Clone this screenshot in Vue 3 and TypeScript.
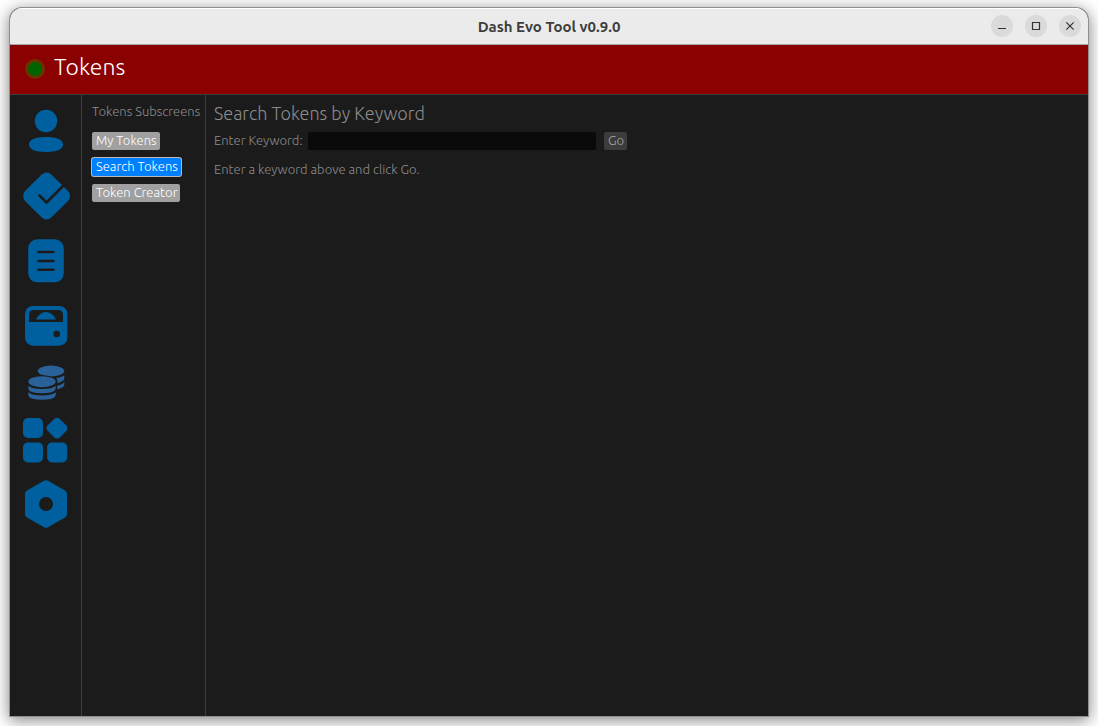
<script setup lang="ts">
import { ref } from 'vue'

const subscreens: string[] = ['My Tokens', 'Search Tokens', 'Token Creator']
const active = ref<string>('Search Tokens')
const keyword = ref<string>('')
</script>

<template>
  <div class="window">
    <header class="titlebar">
      <span class="title">Dash Evo Tool v0.9.0</span>
      <div class="controls">
        <button type="button" aria-label="Minimize">
          <svg viewBox="0 0 22 22"><path d="M7 13.5h8" /></svg>
        </button>
        <button type="button" aria-label="Maximize">
          <svg viewBox="0 0 22 22"><path d="M7.5 7.5h7v7h-7z" /></svg>
        </button>
        <button type="button" aria-label="Close">
          <svg viewBox="0 0 22 22"><path d="M7.3 7.3l7.4 7.4M14.7 7.3l-7.4 7.4" /></svg>
        </button>
      </div>
    </header>

    <div class="banner">
      <span class="status"></span>
      <h1>Tokens</h1>
    </div>

    <div class="body">
      <nav class="rail">
        <button type="button" aria-label="Identities">
          <svg viewBox="0 0 48 50">
            <circle cx="24" cy="15" r="11.2" />
            <path d="M24 31c12 0 17 3 17 7.500s-5 7.500-17 7.500-17-3-17-7.500 5-7.500 17-7.500z" />
          </svg>
        </button>
        <button type="button" aria-label="Contracts">
          <svg viewBox="0 0 48 50">
            <path d="M20 3.200Q24.500 0 29 3.200L46 20Q50 25 46 30L29 46.800Q24.500 50 20 46.800L3 30Q-.5 25 3 20z" />
            <path class="cut" d="M17.500 24.500l7 7L43 13" />
          </svg>
        </button>
        <button type="button" aria-label="Documents">
          <svg viewBox="0 0 48 50">
            <rect x="6.200" y="3.300" width="35.600" height="43" rx="9" />
            <path class="cut" d="M16.500 16h15M16.500 25h15M16.500 33.800h15" />
          </svg>
        </button>
        <button type="button" aria-label="Wallets">
          <svg viewBox="0 0 48 50">
            <rect x="3" y="5" width="42.400" height="39.700" rx="8" />
            <path class="hole" d="M7 21v-7q0-5 5-5h24q5 0 5 5v7z" />
            <path d="M14 18.400c2-4 6-7.400 10-7.400s8 3.400 10 7.400z" />
            <circle class="hole" cx="34.700" cy="33" r="3.300" />
          </svg>
        </button>
        <button type="button" aria-label="Tokens" class="coins">
          <svg viewBox="0 0 48 34">
            <ellipse cx="29" cy="5" rx="13.300" ry="5.400" />
            <path d="M42.300 9.500v3.200q-1 3-7 4.200v-3.400q-1-1-1.600-1.400 6-.8 8.600-2.600zM42.300 15.800v3.200q-1 3-7 4.200v-3.600q6-1 7-3.800z" />
            <ellipse class="rim" cx="20" cy="15.700" rx="14.600" ry="6.400" />
            <ellipse cx="20" cy="15.700" rx="13.700" ry="5.500" />
            <path d="M6.300 19.800q4 3.200 13.700 3.200t13.700-3.200v3.200q-1.700 4.300-13.700 4.300T6.300 23z" />
            <path d="M6.300 26.200q4 3.200 13.700 3.200t13.700-3.200v3.200q-1.700 4.300-13.700 4.300T6.300 29.400z" />
          </svg>
        </button>
        <button type="button" aria-label="Tools">
          <svg viewBox="0 0 48 50">
            <rect x="1" y="3" width="20" height="20" rx="5" />
            <path d="M32.500 3.700q2.500-1.800 5 0l7.200 7.100q1.800 2.400 0 4.800l-7.200 7.100q-2.500 1.800-5 0l-7.200-7.100q-1.800-2.400 0-4.800z" />
            <rect x="1" y="27.400" width="20" height="20" rx="5" />
            <rect x="25.200" y="27.400" width="20" height="20" rx="5" />
          </svg>
        </button>
        <button type="button" aria-label="Settings">
          <svg viewBox="0 0 48 50">
            <path d="M22 .8q2-1.200 4 0l17 9.700q2 1.300 2 3.500v20q0 2.200-2 3.500l-17 9.700q-2 1.200-4 0l-17-9.700q-2-1.300-2-3.500V14q0-2.200 2-3.500z" />
            <circle class="hole" cx="24" cy="24" r="7" />
          </svg>
        </button>
      </nav>

      <aside class="subscreens">
        <p>Tokens Subscreens</p>
        <button
          v-for="name in subscreens"
          :key="name"
          type="button"
          :class="{ active: name === active }"
          @click="active = name"
        >{{ name }}</button>
      </aside>

      <main>
        <h2>Search Tokens by Keyword</h2>
        <form @submit.prevent>
          <label for="keyword">Enter Keyword:</label>
          <input id="keyword" v-model="keyword" type="text" />
          <button type="submit">Go</button>
        </form>
        <p>Enter a keyword above and click Go.</p>
      </main>
    </div>
  </div>
</template>

<style>
body {
  background: #fff;
}
</style>

<style scoped>
* {
  box-sizing: border-box;
}

h1, h2, p {
  margin: 0;
  font-weight: 300;
}

button {
  padding: 0;
  border: 0;
  font: inherit;
}

.window {
  display: flex;
  flex-direction: column;
  min-height: calc(100vh - 18px);
  margin: 8px 10px 10px;
  overflow: hidden;
  border-radius: 12px 12px 0 0;
  background: #1b1b1b;
  color: #8c8c8c;
  font: 300 13px/16px Ubuntu, "Open Sans", "Noto Sans", sans-serif;
  box-shadow: 0 0 0 1px #8f8f8f, 0 3px 16px 1px rgba(0, 0, 0, 0.5);
}

.titlebar {
  display: grid;
  grid-template-columns: 1fr auto 1fr;
  align-items: center;
  height: 37px;
  padding: 0 7px;
  border-bottom: 1px solid #a5a5a5;
  background: #ebebeb;
  box-shadow: inset 0 1px #fff;
}

.title {
  grid-column: 2;
  padding-top: 2px;
  color: #3d3d3d;
  font-size: 15px;
  font-weight: 700;
}

.controls {
  display: flex;
  justify-content: flex-end;
  gap: 12px;
}

.controls button {
  width: 22px;
  height: 22px;
  border-radius: 50%;
  background: #dadada;
}

.controls svg {
  display: block;
  fill: none;
  stroke: #333;
  stroke-width: 1.200;
}

.banner {
  display: flex;
  align-items: center;
  gap: 9px;
  height: 50px;
  padding: 0 15px 4px;
  border-bottom: 1px solid #3c3c3c;
  background: #8b0000;
}

.status {
  width: 20px;
  height: 20px;
  margin-top: 2px;
  border: 3px solid #6b3300;
  border-radius: 50%;
  background: #006400;
}

h1 {
  padding-bottom: 2px;
  color: #fff;
  font-size: 23px;
  line-height: 28px;
}

.body {
  display: flex;
  flex: 1;
}

.rail {
  display: flex;
  flex-direction: column;
  gap: 15px;
  width: 72px;
  padding: 11px 11px 0 12px;
  border-right: 1px solid #3c3c3c;
}

.rail button {
  width: 48px;
  height: 50px;
  background: none;
}

.rail .coins {
  height: 34px;
}

.rail svg {
  display: block;
  overflow: visible;
  fill: #00609f;
}

.rail .coins svg {
  fill: #2b6199;
}

.rail .cut {
  fill: none;
  stroke: #1b1b1b;
  stroke-width: 2.600;
  stroke-linecap: round;
  stroke-linejoin: round;
}

.rail .hole,
.rail .rim {
  fill: #1b1b1b;
}

.subscreens {
  display: flex;
  flex-direction: column;
  align-items: flex-start;
  gap: 8px;
  width: 124px;
  padding: 8px 9px 0 10px;
  border-right: 1px solid #3c3c3c;
  white-space: nowrap;
}

.subscreens p {
  margin-bottom: 5px;
}

.subscreens button {
  height: 18px;
  padding: 0 3px 2px 4px;
  border-radius: 2px;
  background: #a0a0a0;
  color: #fff;
}

.subscreens .active {
  background: #0080ff;
  box-shadow: 0 0 0 1px #b8b8b8;
}

main {
  flex: 1;
  padding: 7px 8px;
}

h2 {
  padding-bottom: 2px;
  font-size: 18px;
  line-height: 22px;
}

form {
  display: flex;
  gap: 8px;
  margin: 6px 0 11px;
}

label {
  width: 86px;
  white-space: nowrap;
}

input {
  width: 288px;
  height: 18px;
  padding: 0 4px;
  border: 0;
  border-radius: 2px;
  outline: 0;
  background: #0a0a0a;
  color: #8c8c8c;
  font: inherit;
}

form button {
  height: 18px;
  padding: 0 3px 2px 4px;
  border-radius: 2px;
  background: #3c3c3c;
  color: #a5a5a5;
}
</style>
